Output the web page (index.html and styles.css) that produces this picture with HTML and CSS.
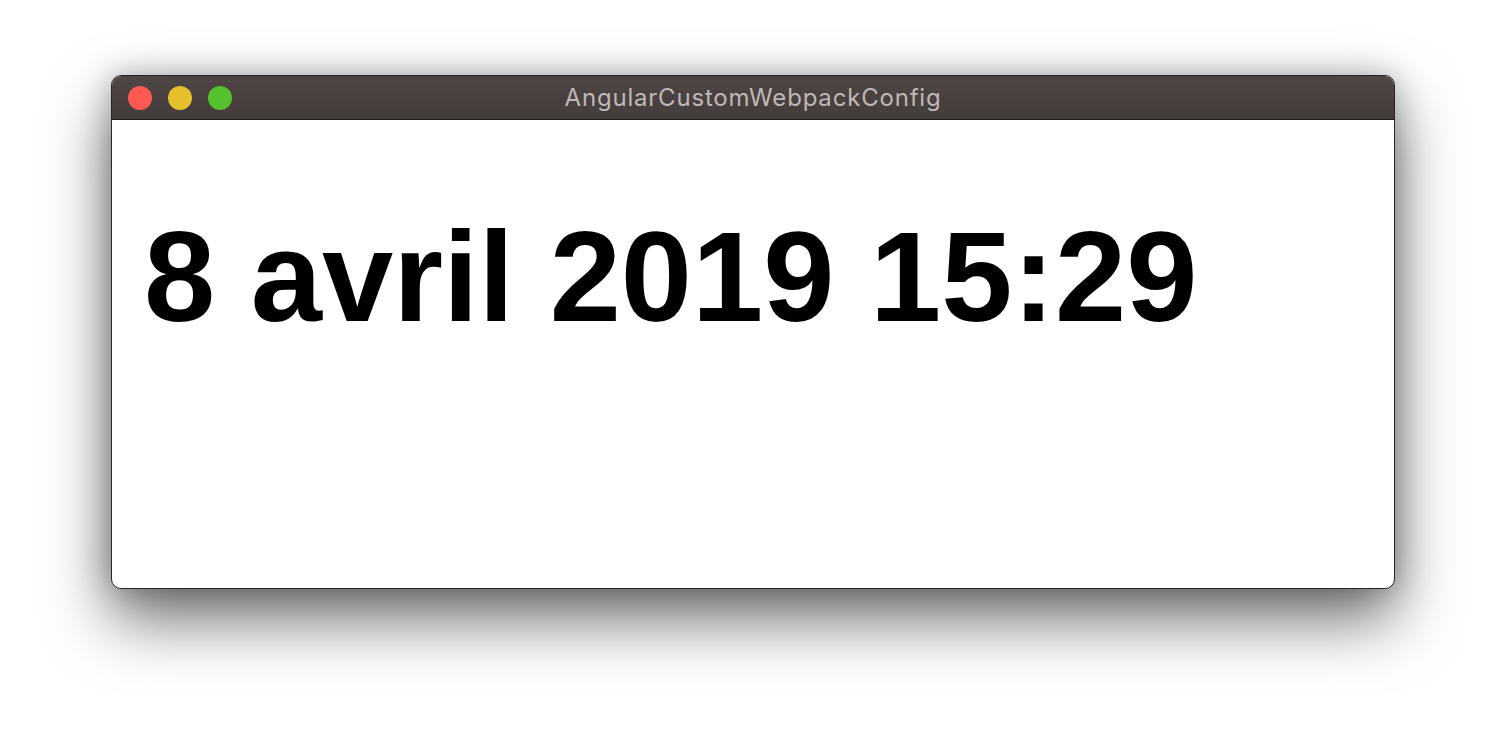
FILE: index.html
```html
<!DOCTYPE html>
<html>
<head>
<meta charset="utf-8">
<link rel="stylesheet" href="styles.css">
</head>
<body>
<div class="stage">
  <div class="window">
    <div class="titlebar">
      <div class="lights">
        <span class="light red"></span>
        <span class="light yellow"></span>
        <span class="light green"></span>
      </div>
      <div class="title">AngularCustomWebpackConfig</div>
    </div>
    <div class="content">
      <h1 class="date">8 avril 2019 15:29</h1>
    </div>
  </div>
</div>
</body>
</html>
```

FILE: styles.css
```css
html, body {
  margin: 0;
  padding: 0;
  background: #ffffff;
  width: 1506px;
  height: 736px;
  overflow: hidden;
}
.stage {
  padding: 75px 0 0 111px;
}
.window {
  width: 1284px;
  height: 514px;
  box-sizing: border-box;
  border: 1px solid #2a2524;
  border-radius: 10px;
  overflow: hidden;
  background: #ffffff;
  display: flex;
  flex-direction: column;
  box-shadow: 0 30px 65px rgba(0,0,0,0.58), 0 0 30px rgba(0,0,0,0.25);
}
.titlebar {
  position: relative;
  height: 43px;
  flex: none;
  background: linear-gradient(#4e4644, #443c3a);
  border-bottom: 1px solid #1e1a19;
  display: flex;
  align-items: center;
}
.lights {
  display: flex;
  gap: 16px;
  padding-left: 16px;
}
.light {
  width: 24px;
  height: 24px;
  border-radius: 50%;
  display: block;
}
.red { background: #fe5a52; }
.yellow { background: #e6bf2c; }
.green { background: #53c22c; }
.title {
  position: absolute;
  left: 0;
  right: 0;
  top: 0;
  bottom: 0;
  display: flex;
  align-items: center;
  justify-content: center;
  font-family: Inter, "Liberation Sans", Arial, sans-serif;
  font-size: 24px;
  letter-spacing: 0.8px;
  color: #bfb7b5;
}
.content {
  flex: 1;
  padding: 0 32px;
}
.date {
  margin: 82px 0 0 0;
  font-family: "Liberation Sans", Arial, sans-serif;
  font-weight: bold;
  font-size: 128px;
  line-height: 150px;
  color: #000;
  white-space: nowrap;
}
```
